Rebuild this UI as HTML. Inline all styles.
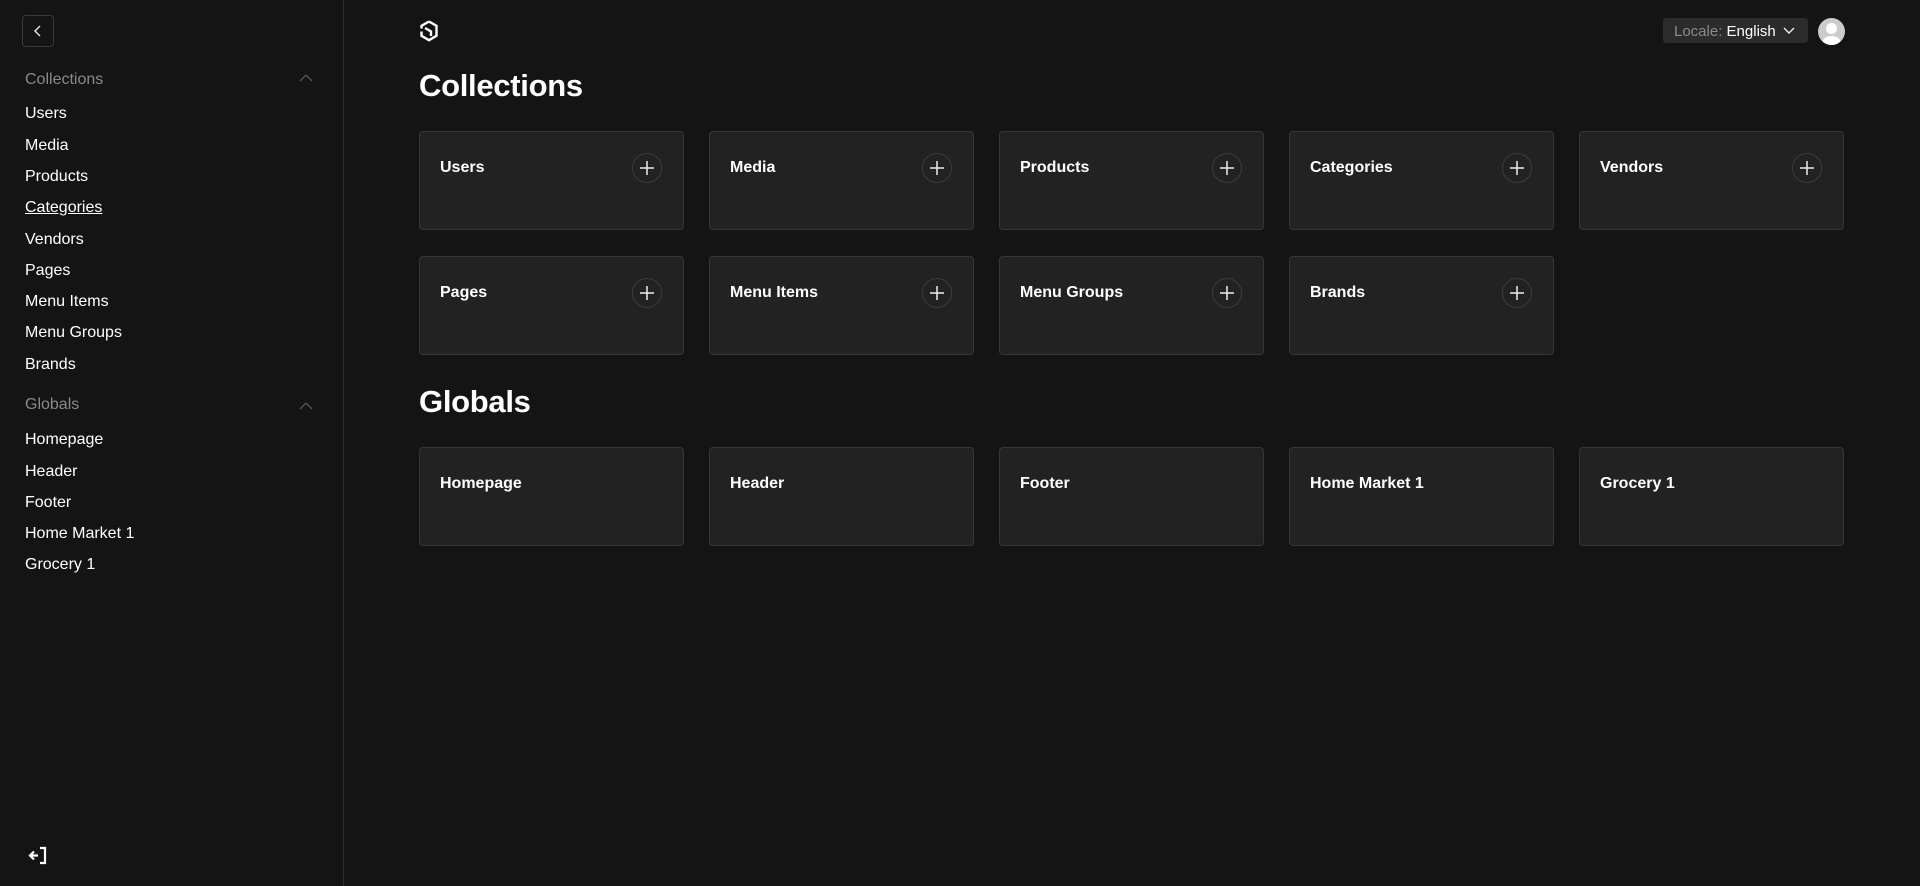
<!DOCTYPE html>
<html><head><meta charset="utf-8"><style>
*{box-sizing:border-box;margin:0;padding:0}
html,body{width:1920px;height:886px;background:#141414;overflow:hidden;font-family:"Liberation Sans",sans-serif;color:#fff}
.sb{position:absolute;left:0;top:0;width:344px;height:886px;border-right:1px solid #2c2c2c}
.back{position:absolute;left:22px;top:15px;width:32px;height:32px;border:1px solid #3a3a3a;border-radius:4px}
.abs{position:absolute;white-space:nowrap}
.lbl{color:#8a8a8a;font-size:16px;left:25px}
.it{font-size:16px;left:25px;color:#fff}
.chev{position:absolute;left:299px}
h1{position:absolute;left:419px;font-size:31px;font-weight:700;letter-spacing:-0.3px}
.card{position:absolute;width:265px;height:99px;background:#222;border:1px solid #363636;border-radius:4px}
.card span{position:absolute;left:20px;top:27px;font-size:16px;font-weight:700}
.plus{position:absolute;right:21px;top:21px;width:30px;height:30px;border:1px solid #3c3c3c;border-radius:50%}
</style></head><body>
<div class="sb">
<div class="back"><svg width="30" height="30" viewBox="0 0 30 30"><path d="M17 10l-5 5 5 5" stroke="#ddd" stroke-width="1.5" fill="none"/></svg></div>
<div class="abs lbl" style="top:71px">Collections</div>
<svg class="chev" style="top:73px" width="14" height="10" viewBox="0 0 14 10"><path d="M1 8l6-6 6 6" stroke="#555" stroke-width="1.3" fill="none"/></svg>
<div class="abs it" style="top:105px">Users</div>
<div class="abs it" style="top:137px">Media</div>
<div class="abs it" style="top:168px">Products</div>
<div class="abs it" style="top:199px;text-decoration:underline">Categories</div>
<div class="abs it" style="top:231px">Vendors</div>
<div class="abs it" style="top:262px">Pages</div>
<div class="abs it" style="top:293px">Menu Items</div>
<div class="abs it" style="top:324px">Menu Groups</div>
<div class="abs it" style="top:356px">Brands</div>
<div class="abs lbl" style="top:396px">Globals</div>
<div class="abs" style="left:299px;top:398px"><svg width="14" height="10" viewBox="0 0 14 10"><path d="M1 8l6-6 6 6" stroke="#555" stroke-width="1.3" fill="none"/></svg></div>
<div class="abs it" style="top:431px">Homepage</div>
<div class="abs it" style="top:463px">Header</div>
<div class="abs it" style="top:494px">Footer</div>
<div class="abs it" style="top:525px">Home Market 1</div>
<div class="abs it" style="top:556px">Grocery 1</div>
<svg class="abs" style="left:27px;top:846px" width="22" height="20" viewBox="0 0 22 20"><path d="M13 2h5v15h-5M11 9.5H3M7 5.5l-4 4 4 4" stroke="#fff" stroke-width="2.2" fill="none"/></svg>
</div>
<svg class="abs" style="left:419px;top:19px" width="20" height="24" viewBox="0 0 20 24"><path d="M10 2.5L17.5 6.8V16.8L10 21.2 2.5 16.8V12.5M2.5 9.5V6.8L10 2.5" stroke="#fff" stroke-width="2.4" fill="none"/><path d="M6 9l6 3.5V17" stroke="#fff" stroke-width="2.4" fill="none"/></svg>
<div class="abs" style="left:1663px;top:18px;width:145px;height:25px;background:#2b2b2b;border-radius:3px;font-size:15px;padding:5px 0 0 11px"><span style="color:#8a8a8a">Locale:</span> English <svg width="14" height="10" viewBox="0 0 14 10" style="margin-left:2px"><path d="M2 2l5 5 5-5" stroke="#eee" stroke-width="1.4" fill="none"/></svg></div>
<div class="abs" style="left:1818px;top:18px;width:27px;height:27px;border-radius:50%;background:#ccc;overflow:hidden"><div style="position:absolute;left:8px;top:5px;width:11px;height:11px;border-radius:50%;background:#fff"></div><div style="position:absolute;left:4px;top:18px;width:19px;height:14px;border-radius:50%;background:#fff"></div></div>
<h1 style="top:68px">Collections</h1>
<h1 style="top:384px">Globals</h1>
<div id="cards"></div>
<script>
var c='<svg width="28" height="28" viewBox="0 0 28 28"><path d="M14 7v14M7 14h14" stroke="#eee" stroke-width="1.5"/></svg>';
var rows=[[131,["Users","Media","Products","Categories","Vendors"],1],[256,["Pages","Menu Items","Menu Groups","Brands"],1],[447,["Homepage","Header","Footer","Home Market 1","Grocery 1"],0]];
var h='';rows.forEach(function(r){r[1].forEach(function(t,i){h+='<div class="card" style="left:'+(419+i*290)+'px;top:'+r[0]+'px"><span>'+t+'</span>'+(r[2]?'<div class="plus">'+c+'</div>':'')+'</div>';});});
document.getElementById('cards').innerHTML=h;
</script>
</body></html>
